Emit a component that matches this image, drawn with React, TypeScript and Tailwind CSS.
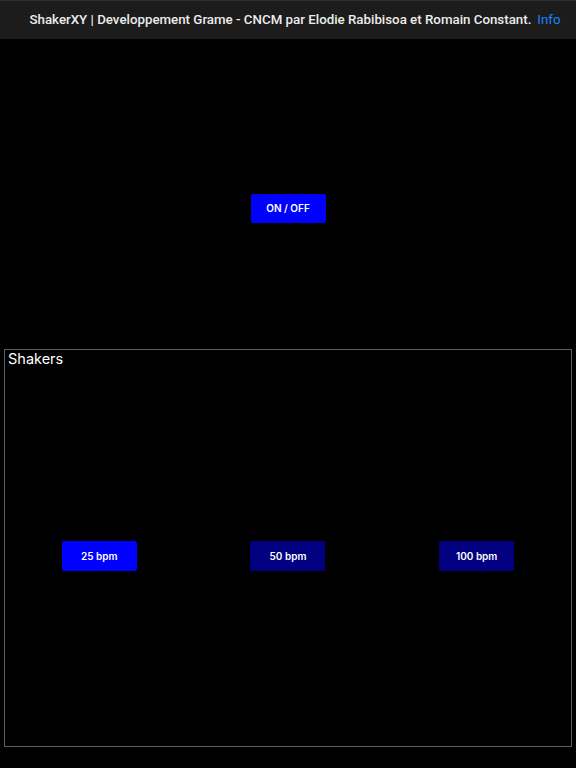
export default function App() {
  const tempos = [
    { label: '25 bpm', active: true },
    { label: '50 bpm', active: false },
    { label: '100 bpm', active: false },
  ]

  return (
    <div
      className="w-[576px] h-[768px] bg-black flex flex-col overflow-hidden"
      style={{ fontFamily: 'Inter, "Noto Sans", sans-serif' }}
    >
      {/* Header */}
      <div
        className="h-[39px] bg-[#1c1c1c] border-t border-[#2e2e2e] flex items-center justify-center gap-[6px] text-[13.3px] whitespace-nowrap shrink-0 pl-[14px]"
        style={{ fontFamily: 'Roboto, "Noto Sans", sans-serif' }}
      >
        <span className="text-[#ececec] font-medium">
          ShakerXY | Developpement Grame - CNCM par Elodie Rabibisoa et Romain Constant.
        </span>
        <span className="text-[#1a84ff]">Info</span>
      </div>

      {/* Power */}
      <div className="h-[310px] flex justify-center pt-[155px] shrink-0">
        <button className="w-[75px] h-[29px] bg-[#0000ff] rounded-[2px] text-white text-[10px] font-semibold">
          ON / OFF
        </button>
      </div>

      {/* Shakers */}
      <div className="mx-[4px] h-[398px] border border-[#5e5e5e] flex flex-col">
        <div className="text-white text-[14.5px] leading-[15px] pl-[3px] mt-[1px] mb-[2px]">Shakers</div>
        <div className="flex-1 grid grid-cols-3 items-center pb-[2px]">
          {tempos.map((t) => (
            <div key={t.label} className="flex justify-center">
              <button
                className={`w-[75px] h-[30px] rounded-[2px] text-white text-[10px] font-semibold ${
                  t.active ? 'bg-[#0000ff]' : 'bg-[#000080]'
                }`}
              >
                {t.label}
              </button>
            </div>
          ))}
        </div>
      </div>
    </div>
  )
}
